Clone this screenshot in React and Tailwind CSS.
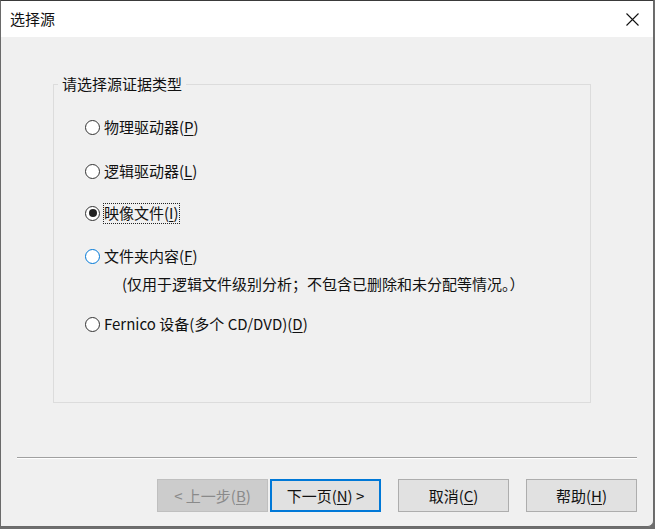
const font = { fontFamily: '"Noto Sans CJK SC", "Noto Sans", sans-serif' }

function Radio({ state = 'off' }) {
  if (state === 'on') {
    return (
      <span className="flex h-[15px] w-[15px] shrink-0 items-center justify-center rounded-full border border-[#333] bg-white">
        <span className="h-[8px] w-[8px] rounded-full bg-[#222]" />
      </span>
    )
  }
  const border = state === 'hover' ? 'border-[#0078d7]' : 'border-[#333]'
  return <span className={`h-[15px] w-[15px] shrink-0 rounded-full border bg-white ${border}`} />
}

function Option({ label, keyChar, state, focused, className = '' }) {
  const text = (
    <span>
      {label}(<span className="underline underline-offset-2">{keyChar}</span>)
    </span>
  )
  return (
    <div className={`flex h-[22px] items-center gap-[3px] ${className}`}>
      <Radio state={state} />
      {focused ? (
        <span className="flex h-[21px] items-center border border-dotted border-[#222]">{text}</span>
      ) : (
        <span className="pl-[1px]">{text}</span>
      )}
    </div>
  )
}

function Btn({ children, variant = 'normal', className = '' }) {
  const styles = {
    normal: 'border border-[#adadad] bg-[#e1e1e1] text-[#111]',
    primary: 'border-2 border-[#0078d7] bg-[#e1e1e1] text-[#111]',
    disabled: 'border border-[#bfbfbf] bg-[#cccccc] text-[#8a8a8a]',
  }
  return (
    <div className={`flex h-[33px] w-[111px] items-center justify-center text-[15px] ${styles[variant]} ${className}`}>
      {children}
    </div>
  )
}

const U = ({ c }) => <span className="underline underline-offset-2">{c}</span>

export default function App() {
  return (
    <div className="h-[529px] w-[655px] overflow-hidden bg-[#6e6e6e]" style={font}>
      <div className="flex h-[527px] w-[654px] flex-col overflow-hidden rounded-br-[6px] border border-[#6a6a6a] border-t-[#3a3a3a] bg-[#f0f0f0] text-[15px] leading-[20px] text-[#111]">
        <div className="flex h-[36px] shrink-0 items-center justify-between bg-white pl-[9px] pr-[14px]">
          <span>选择源</span>
          <svg width="13" height="13" viewBox="0 0 13 13" className="text-[#111]">
            <path d="M0.5 0.5 L12.5 12.5 M12.5 0.5 L0.5 12.5" stroke="currentColor" strokeWidth="1.1" fill="none" />
          </svg>
        </div>

        <div className="relative ml-[52px] mt-[47px] h-[319px] w-[538px] shrink-0 border border-[#dcdcdc] pl-[31px] pt-[31px]">
          <span className="absolute -top-[11px] left-[4px] bg-[#f0f0f0] px-[4px]">请选择源证据类型</span>
          <Option label="物理驱动器" keyChar="P" />
          <Option label="逻辑驱动器" keyChar="L" className="mt-[22px]" />
          <Option label="映像文件" keyChar="I" state="on" focused className="mt-[20px]" />
          <Option label="文件夹内容" keyChar="F" state="hover" className="mt-[21px]" />
          <div className="mt-[7px] h-[22px] pl-[37px]">(仅用于逻辑文件级别分析；不包含已删除和未分配等情况。）</div>
          <Option label="Fernico 设备(多个 CD/DVD)" keyChar="D" className="mt-[17px]" />
        </div>

        <div className="ml-[16px] mt-[54px] w-[620px] shrink-0 border-b border-t border-b-white border-t-[#a0a0a0]" />

        <div className="ml-[156px] mt-[20px] flex shrink-0">
          <Btn variant="disabled">&lt; 上一步(<U c="B" />)</Btn>
          <Btn variant="primary" className="ml-[2px]">下一页(<U c="N" />) &gt;</Btn>
          <Btn className="ml-[17px]">取消(<U c="C" />)</Btn>
          <Btn className="ml-[17px]">帮助(<U c="H" />)</Btn>
        </div>
      </div>
    </div>
  )
}
